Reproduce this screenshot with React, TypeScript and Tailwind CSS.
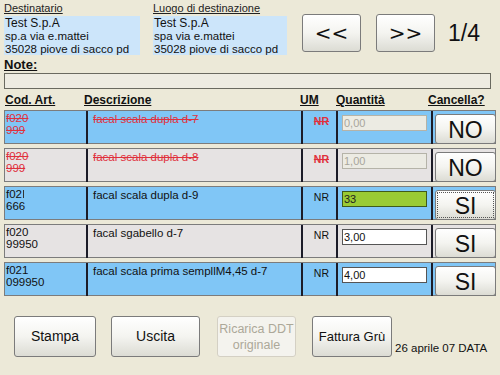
import React from 'react';

type Row = {
  cod: [string, string];
  desc: string;
  qty: string;
  deleted: boolean;
  blue: boolean;
  cancel: string;
  state: 'disabled' | 'active' | 'normal';
  focus?: boolean;
  caret?: boolean;
};

const rows: Row[] = [
  { cod: ['f020', '999'], desc: 'facal scala dupla d-7', qty: '0,00', deleted: true, blue: true, cancel: 'NO', state: 'disabled' },
  { cod: ['f020', '999'], desc: 'facal scala dupla d-8', qty: '1,00', deleted: true, blue: false, cancel: 'NO', state: 'disabled' },
  { cod: ['f02', '666'], desc: 'facal scala dupla d-9', qty: '33', deleted: false, blue: true, cancel: 'SI', state: 'active', focus: true, caret: true },
  { cod: ['f020', '99950'], desc: 'facal sgabello d-7', qty: '3,00', deleted: false, blue: false, cancel: 'SI', state: 'normal' },
  { cod: ['f021', '099950'], desc: 'facal scala prima sempllM4,45 d-7', qty: '4,00', deleted: false, blue: true, cancel: 'SI', state: 'normal' },
];

const xpButton =
  'border border-[#7b7b7b] rounded-[3px] bg-gradient-to-b from-[#ffffff] via-[#f4f4f0] to-[#dcdcd4] text-[#111]';

function InfoBox({ label, lines, width }: { label: string; lines: string[]; width: string }) {
  return (
    <div className={width}>
      <div className="text-[11px] leading-[13px] underline text-[#222]">{label}</div>
      <div className="mt-[1px] h-[39px] bg-[#cce5fa] pl-[1px] pt-[1px] text-[11.5px] leading-[12.5px] text-[#111]">
        {lines.map((l, i) => (
          <div key={i} className={i === 0 ? 'text-[12px] leading-[13px]' : ''}>{l}</div>
        ))}
      </div>
    </div>
  );
}

function TableRow({ r }: { r: Row }) {
  const text = r.deleted ? 'text-[#e0303c] line-through' : 'text-[#111]';
  const sep = 'border-l-2 border-[#1c1c28]';
  let input = 'bg-white border-[#555] text-[#111]';
  if (r.state === 'disabled') input = 'bg-[#ecebe3] border-[#b5b3a8] text-[#a8a69c]';
  if (r.state === 'active') input = 'bg-[#9acb34] border-[#3f5a1a] text-[#222]';
  return (
    <div
      className={`h-[34px] border border-[#7c7c7c] grid grid-cols-[81px_215px_35px_95px_1fr] ${
        r.blue ? 'bg-[#80c6f6]' : 'bg-[#e6e3e3]'
      }`}
    >
      <div className={`pl-[1px] pt-[1px] text-[11.5px] leading-[12px] ${text}`}>
        <div className="flex items-center">
          {r.cod[0]}
          {r.caret && <span className="ml-[1px] w-[1px] h-[8px] bg-[#333] inline-block" />}
        </div>
        <div>{r.cod[1]}</div>
      </div>
      <div className={`${sep} pl-[5px] pt-[2px] text-[11.5px] leading-[13px] whitespace-nowrap overflow-hidden ${text}`}>
        {r.desc}
      </div>
      <div
        className={`${sep} pr-[7px] pt-[4px] text-right text-[10.5px] leading-[12px] ${
          r.deleted ? 'text-[#e0303c] line-through font-bold' : 'text-[#111]'
        }`}
      >
        NR
      </div>
      <div className={`${sep} pl-[4px] pt-[4px]`}>
        <div className={`w-[85px] h-[16px] border px-[1px] text-[11px] leading-[14px] ${input}`}>{r.qty}</div>
      </div>
      <div className={`${sep} pl-[2px] pt-[3px]`}>
        <div className={`w-[61px] h-[30px] flex items-center justify-center ${xpButton}`}>
          <div
            className={`w-[57px] h-[26px] flex items-center justify-center text-[23px] leading-[23px] pt-[3px] ${
              r.focus ? 'border border-dotted border-[#555]' : ''
            }`}
          >
            {r.cancel}
          </div>
        </div>
      </div>
    </div>
  );
}

export default function App() {
  return (
    <div className="w-[500px] h-[375px] bg-[#ece9d8] font-['Liberation_Sans',Arial,sans-serif] overflow-hidden">
      {/* Header */}
      <div className="flex pl-[4px] pt-[2px]">
        <InfoBox label="Destinatario" width="w-[136px]" lines={['Test S.p.A', 'sp.a via e.mattei', '35028 piove di sacco pd']} />
        <div className="ml-[13px]">
          <InfoBox label="Luogo di destinazione" width="w-[134px]" lines={['Test S.p.A', 'spa via e.mattei', '35028 piove di sacco pd']} />
        </div>
        <div className={`ml-[15px] mt-[12px] w-[59px] h-[38px] flex items-center justify-center font-['DejaVu_Sans',sans-serif] text-[20px] ${xpButton}`}>
          &lt;&lt;
        </div>
        <div className={`ml-[15px] mt-[12px] w-[59px] h-[38px] flex items-center justify-center font-['DejaVu_Sans',sans-serif] text-[20px] ${xpButton}`}>
          &gt;&gt;
        </div>
        <div className="ml-[13px] mt-[17px] text-[23px] leading-[28px] text-[#111]">1/4</div>
      </div>

      {/* Note */}
      <div className="pl-[4px] mt-[2px]">
        <div className="text-[13px] leading-[15px] font-bold underline text-[#111]">Note:</div>
        <div className="mt-[1px] w-[487px] h-[16px] border border-[#6a6a60] bg-[#eeece2]" />
      </div>

      {/* Column headers */}
      <div className="mt-[4px] ml-[4px] w-[492px] grid grid-cols-[80px_216px_35px_93px_1fr] text-[12px] leading-[14px] font-bold underline text-[#111]">
        <div className="pl-[1px]">Cod. Art.</div>
        <div>Descrizione</div>
        <div>UM</div>
        <div className="pl-[1px]">Quantità</div>
        <div>Cancella?</div>
      </div>

      {/* Rows */}
      <div className="mt-[3px] ml-[4px] w-[492px] flex flex-col gap-[4px]">
        {rows.map((r, i) => (
          <TableRow key={i} r={r} />
        ))}
      </div>

      {/* Footer */}
      <div className="flex items-end mt-[20px] pl-[14px]">
        <div className={`w-[82px] h-[41px] flex items-center justify-center text-[14px] ${xpButton}`}>Stampa</div>
        <div className={`ml-[15px] w-[89px] h-[41px] flex items-center justify-center text-[14px] ${xpButton}`}>Uscita</div>
        <div className="ml-[17px] w-[79px] h-[41px] flex flex-col items-center justify-center text-[12.5px] leading-[16px] text-[#aca899] border border-[#d4d0c4] rounded-[3px] bg-[#f4f3ee]">
          <span>Ricarica DDT</span>
          <span>originale</span>
        </div>
        <div className={`ml-[16px] w-[80px] h-[41px] flex items-center justify-center text-[13px] ${xpButton}`}>Fattura Grù</div>
        <div className="ml-[3px] mb-[2px] text-[11.5px] leading-[13px] text-[#111] whitespace-nowrap">26 aprile 07 DATA</div>
      </div>
    </div>
  );
}
